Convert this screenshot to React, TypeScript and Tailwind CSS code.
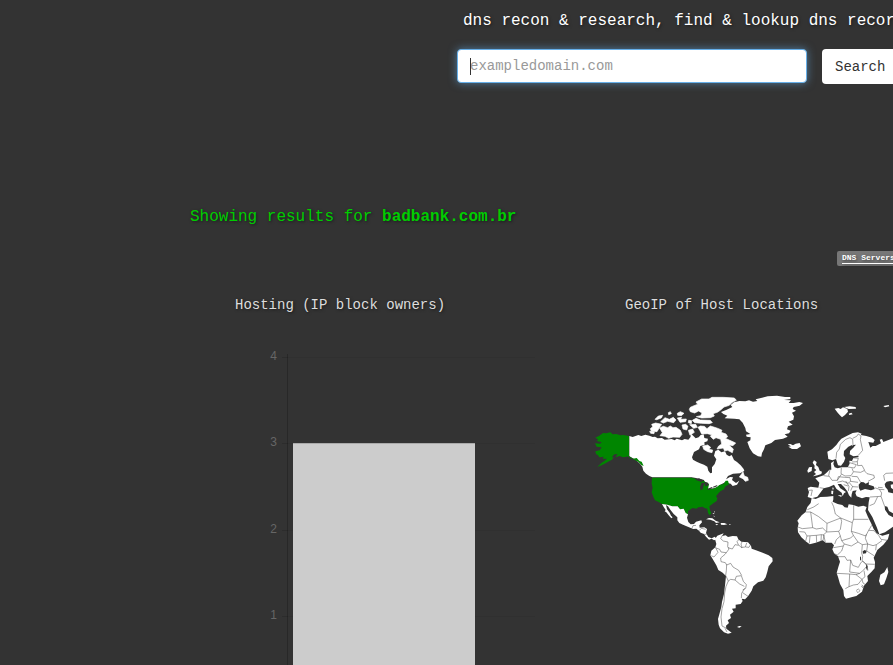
const SHADOW = "[text-shadow:1px_1px_3px_rgba(0,0,0,0.5)]";

function SearchHeader() {
  return (
    <header className="flex flex-col pl-[457px]">
      <h1 className={`whitespace-nowrap pt-[9px] pl-[6px] text-base leading-6 text-white ${SHADOW}`}>
        dns recon &amp; research, find &amp; lookup dns records
      </h1>
      <form className="mt-4 flex items-start gap-[15px]" onSubmit={(e) => e.preventDefault()}>
        <div className="relative shrink-0">
          <input
            type="text"
            autoFocus
            aria-label="Domain"
            placeholder="exampledomain.com"
            className="block h-[34px] w-[350px] rounded-[4px] border border-[#66afe9] bg-white px-3 text-sm text-[#555] caret-transparent shadow-[0_0_8px_rgba(102,175,233,0.6)] outline-none placeholder:text-[#999]"
          />
          <span aria-hidden="true" className="absolute top-[9px] left-[13px] h-[17px] w-px bg-[#333]" />
        </div>
        <button type="submit" className="h-[35px] shrink-0 rounded-[4px] bg-white px-[13px] text-sm text-[#333]">
          Search
        </button>
      </form>
    </header>
  );
}

const TICKS = [
  { label: "4", y: 17 },
  { label: "3", y: 103 },
  { label: "2", y: 190 },
  { label: "1", y: 276 },
];

function HostingChart() {
  return (
    <svg viewBox="0 0 300 380" className="mt-[25px] ml-[15px] block h-[380px] w-[300px]" role="img" aria-label="Hosting by IP block owner">
      {TICKS.map((t) => (
        <g key={t.label}>
          <path d={`M32 ${t.y + 0.5}H38`} stroke="#000" strokeOpacity=".12" />
          <path d={`M38 ${t.y + 0.5}H285`} stroke="#000" strokeOpacity=".06" />
          <text x="27" y={t.y + 3} textAnchor="end" fontSize="12" fill="#666" fontFamily="Liberation Sans, Arial, sans-serif">
            {t.label}
          </text>
        </g>
      ))}
      <path d="M37.5 14V370" stroke="#000" strokeOpacity=".2" />
      <path d="M43 103H225V362H43Z" fill="#ccc" />
      <path d="M43 103.5H225" stroke="#aaa" />
    </svg>
  );
}

function WorldMap() {
  return (
    <svg viewBox="0 0 909 780" className="mt-[70px] block h-[260px] w-[303px]" role="img" aria-label="World map of host locations" fill="#fff">
      {/* Canada, the Arctic islands and Newfoundland */}
      <g transform="translate(150 15)">
        <path d="M-32 138L-22 141-5 135 4 138 16 134 28 137 38 141 45 140 53 145 66 144 74 149 95 147 104 151 110 146 126 151 134 147 145 149 151 142 154 132 161 139 167 145 176 142 182 135 191 133 193 144 204 146 202 154 193 157 194 164 181 168 177 178 162 186 156 202 159 209 170 215 180 220 192 224 202 230 205 242 211 250 216 248 216 232 224 222 229 208 222 197 226 183 235 179 244 187 255 184 260 194 268 199 275 195 282 210 291 216 302 226 311 237 313 243 300 250 279 251 264 258 258 268 270 261 279 262 276 270 288 279 298 272 291 284 278 288 272 281 263 279 255 277 240 285 227 294 206 297 198 290 192 270 168 264 155 262 37 262 28 258 18 251 10 242 7 230 0 221-12 210-32 199Z" />
        <path
          stroke="#fff"
          strokeWidth="2"
          strokeLinejoin="round"
          d="M298 261L309 246 313 258 323 262 325 271 316 274 309 266ZM148 58L151 52 162 47 173 43 168 36 185 27 207 27 216 22 250 22 283 24 289 31 277 37 268 46 252 51 242 60 232 67 219 71 223 78 211 83 185 84 169 80 182 77 186 69 176 63 164 69 151 65ZM157 91L168 85 181 90 211 91 217 98 207 101 184 100 164 98ZM45 88L55 78 68 76 64 84 50 89ZM62 95L75 83 88 88 100 82 108 90 101 98 83 94 70 99ZM112 70L121 65 132 70 124 77 113 76ZM85 68L91 65 94 71 86 74ZM112 84L125 82 122 88 139 87 137 95 120 97ZM35 103L47 99 65 103 60 110 51 125 34 124 31 116 38 110ZM59 114L70 109 83 113 91 108 99 113 108 112 121 121 126 133 119 142 99 141 86 145 75 139 60 137 67 128ZM126 105L137 103 144 109 140 120 129 117ZM146 91L155 92 154 101 145 98ZM149 104L167 103 172 112 161 115ZM145 121L158 117 163 127 150 136ZM174 112L181 108 193 109 201 116 211 108 224 112 236 116 246 121 243 127 258 132 263 140 256 145 274 153 287 159 279 167 267 165 280 177 277 188 263 181 254 183 250 174 231 177 236 168 245 162 242 148 228 143 220 148 211 139 215 134 202 131 185 132 180 122ZM188 168L203 165 212 172 207 178 218 180 216 188 203 185 191 178ZM29 124L43 126 42 131 32 130Z"
        />
      </g>

      {/* Greenland, Iceland, Svalbard */}
      <g transform="translate(390 0)">
        <path d="M3 81L20 74 37 66 32 60 42 52 58 48 76 49 87 46 99 50 112 48 107 43 126 38 143 34 171 32 195 36 211 36 211 42 192 45 213 46 206 54 221 54 238 51 249 54 239 62 221 66 218 72 228 77 216 83 222 94 220 104 206 110 218 119 204 124 201 133 212 137 207 145 194 148 203 155 189 161 165 165 154 174 136 181 132 193 126 204 124 215 114 214 99 205 89 190 82 171 91 166 92 157 80 155 78 149 91 147 78 139 76 129 68 113 58 103 43 101 14 100 22 92 10 87ZM203 178L211 177 219 181 227 176 239 174 243 184 231 192 216 192 205 185 213 184ZM344 71L355 69 362 72 369 67 382 72 384 80 375 90 366 97 359 90 353 83ZM372 66L389 64 407 66 408 71 386 72ZM386 86L394 83 398 88 388 90ZM490 63L506 60 508 64 495 67Z" />
      </g>

      {/* United States */}
      <g fill="#008500">
        <path transform="translate(0 120)" d="M117 33L100 30 91 31 79 27 68 28 61 22 49 25 39 24 28 32 16 38 24 43 21 48 35 52 30 56 15 55 20 65 35 67 29 76 16 79 18 87 24 91 28 97 41 95 38 101 51 101 42 109 34 114 22 126 35 121 48 114 57 109 66 104 71 97 65 97 73 88 83 88 76 97 89 93 99 97 118 94 129 101 140 99 148 108 155 110 161 123 154 120 145 110 134 105 117 97Z" />
        <path transform="translate(150 240)" d="M36 38H155L171 43 190 47 207 57 204 73 219 71 232 65 238 60 251 57 257 47 264 47 267 58 255 65 252 73 241 79 234 86 228 94 232 100 230 108 220 115 208 124 210 136 214 145 209 151 204 144 202 131 193 129 188 125 175 127 169 131 158 129 149 134 144 139 144 148 137 144 131 131 120 133 113 124 97 124 82 119 66 117 56 111 45 106 40 95 35 82 38 68 35 56Z" />
      </g>
      <g transform="translate(150 240)">
        <path d="M66 117L82 119 97 124 113 124 120 133 131 131 137 144 144 148 141 158 145 171 152 178 162 177 168 170 184 166 186 172 178 181 179 188 193 187 201 192 198 204 205 216 215 220 224 215 231 222 222 226 215 221 207 224 198 215 192 207 182 203 177 197 169 191 159 192 147 187 129 179 118 174 112 166 112 157 101 147 91 134 84 124 78 120 81 133 89 143 93 152 98 157 94 160 86 151 79 142 74 139 77 135 71 126Z" />
        <path d="M198 163L207 159 217 160 227 167 239 172 228 174 223 169 211 164ZM226 177L235 178 230 181ZM242 174L253 174 262 178 252 180 243 179ZM267 177L273 178 269 180ZM217 144L223 145 222 148ZM221 151L224 155 222 156ZM222 139L225 140 223 143Z" />
        <g fill="#333">
          <path d="M165 44L177 40 190 46 185 51 174 47ZM185 53L193 54 188 73 182 76 180 65ZM192 50L204 53 206 61 196 64ZM201 72L216 66 218 69 205 75ZM219 65L232 60 231 64 221 68Z" />
        </g>
        <path d="M155 192L159 182 168 181M177 197L184 190 197 193M193 208L200 208" fill="none" stroke="#444" strokeWidth="1.5" />
      </g>

      {/* South America */}
      <g transform="translate(330 420)">
        <path d="M45 42L52 32 65 27 71 25 66 33 77 31 84 36 98 33 111 34 115 43 124 50 144 52 153 62 155 71 168 76 188 83 206 91 217 99 218 109 206 124 202 140 197 157 190 167 174 172 160 184 155 197 144 214 135 223 125 221 128 228 122 237 107 239 107 250 96 251 101 260 90 269 93 279 83 286 87 294 78 302 79 311 95 323 84 326 72 322 60 310 56 299 54 282 59 264 64 246 66 231 72 207 75 181 78 153 68 143 55 135 49 121 38 102 31 91 34 77 46 67 49 57ZM111 306L118 303 125 304 118 308Z" />
        <path d="M67 31L62 41 70 48 84 51 83 65 87 72 79 83 M84 68L97 72 105 59 116 61 111 50 117 43M117 61L126 69 123 57 126 51M126 67L136 66 140 54M137 66L147 67 151 60M46 68L59 73 63 81 79 83 75 88 62 99 63 110 76 113 80 120 92 115 99 126 116 136 125 151M34 92L42 96 54 82 47 68M80 119L79 137 77 151 85 168 78 184 74 204 72 230 66 251 63 276 66 303 78 309M85 168L92 163 105 165 109 154 124 152 130 169 139 179 137 190 128 195M105 165L119 177 133 184M134 190L125 205 124 219M128 203L144 214M75 310L81 321" fill="none" stroke="#444" strokeWidth="1.5" />
      </g>

      {/* Europe and western Asia */}
      <g transform="translate(600 120)">
        <path d="M112 80L126 73 139 60 146 50 154 41 170 33 188 24 204 22 215 26 212 30 229 33 246 38 254 45 250 53 235 51 241 68 248 63 257 63 273 55 269 44 276 42 280 51 309 40V305L285 322 268 328 260 306 247 276 234 255 236 232 239 217 228 216 216 220 200 214 196 204 200 196 188 198 185 208 184 218 177 211 172 199 162 186 153 177 143 177 151 190 168 201 162 205 158 214 155 203 139 191 132 179 117 186 101 190 91 203 82 215 65 220 53 216 57 201 53 189 62 185 85 188 88 173 76 160 86 156 101 151 112 141 118 134 124 134 123 114 132 108 130 117 134 127 143 130 155 127 173 127 179 116 178 107 186 108 190 99 207 96 203 92 190 94 179 88 180 76 191 67 186 60 175 65 162 78 161 91 166 99 162 110 153 122 144 121 138 102 127 106 115 102Z" />
        <path d="M68 113L72 106 80 111 78 120 85 126 89 137 96 140 94 147 83 151 69 154 78 147 72 141 79 135 73 130 74 122ZM57 127L66 126 65 138 54 143 52 137ZM143 211L155 211 154 216ZM124 197L130 197 129 208 124 207ZM128 187L131 189 130 194 127 193Z" />
        <g fill="#333">
          <path d="M207 190L206 179 213 171 221 172 227 176 237 171 236 179 251 184 254 192 243 196 225 192 211 197ZM284 177L290 170 301 168 309 170V178L302 179 303 188 309 193V205L295 202 293 194 286 186ZM284 243L292 245 297 258 309 265V277L296 270 285 254Z" />
          <path d="M190 60L198 59 180 78 177 87 173 88 176 74Z" />
        </g>
        <path d="M138 101L140 82 148 72 151 58 167 43 180 38 188 43 189 60M188 40L200 34 205 27 213 33 211 44 218 76 204 92M190 99L205 100 202 110 186 111M179 113L199 119 193 129 174 126M202 110L203 122 216 121 224 136 212 142 190 140 186 130M154 128L153 146 165 153 183 152 190 141M120 134L116 151 126 166 142 166 154 148M101 152L117 154M89 188L106 191M57 196L67 195 63 213M142 166L145 155 164 157 180 158 182 169 174 175 158 168 142 172M182 169L204 172M185 154L202 155 212 172M223 137L231 146 252 151 253 159 234 169M179 174L188 185 205 186M167 168L177 184 175 198M188 184L182 197M161 179L174 183M254 188L268 193 275 204 273 214 240 216M268 193L283 194M273 214L284 244M263 215L253 236 239 242M264 187L278 188M281 151L288 145 309 144M281 151L284 167" fill="none" stroke="#444" strokeWidth="1.5" />
      </g>

      {/* Africa */}
      <g transform="translate(600 330)">
        <path d="M65 9L77 12 91 6 111 5 130 3 130 13 128 20 143 27 157 30 164 37 173 38 176 28 190 30 205 35 220 32 230 36 226 47 234 66 243 84 251 102 260 115 277 122 298 116 294 132 280 149 262 165 256 178 251 188 255 201 254 220 244 231 232 243 234 258 222 272 216 290 199 303 184 307 168 311 162 303 160 285 150 267 144 246 140 234 145 216 150 200 144 184 133 176 127 163 132 151 125 143 107 143 98 136 77 143 59 148 47 139 34 127 24 112 23 98 26 85 22 77 35 61 47 51 52 36 62 24ZM292 216L295 231 289 250 282 268 272 271 267 258 271 239 283 232Z" />
        <path fill="#333" d="M218 169L224 165 230 168 228 175 219 176ZM210 184L213 187 213 197 210 194ZM229 207L233 213 232 228 228 218Z" />
        <path d="M47 51H62L86 65 111 85 152 69 136 57 131 35 125 22M86 26L71 36 52 44M62 51L68 98 37 101 24 96M152 69L155 79 151 103 146 109 110 111 111 85M152 69L187 83 191 72V31M191 73H235M187 83L184 109 190 121 182 129 155 137 151 123 146 109M110 111L101 119 106 142M68 98L79 102 98 99 109 110M28 110L44 111 51 123 47 138M51 123L63 122 79 121 80 142M79 121L94 119 93 138M94 119L102 120 99 137M60 123L58 145M151 123L139 134 134 147M184 109L205 115 227 123 236 106 245 91M190 121L204 141 184 153 163 147 155 137M204 141L217 149 233 147 226 130 229 118M236 106L252 107 266 121M266 121L273 133 292 136M233 147L249 152 259 149 276 137M259 149L257 166M233 147L230 168 252 182M217 149L215 174 218 184 216 197 227 207 254 208M130 158L160 153 163 147M130 175L142 180 155 168 160 153M144 185H165L171 196 182 195 188 211 205 217 212 204 218 198M182 195L179 231 209 235 221 225 228 216M140 235L179 237 177 275 166 281 M179 237L198 239 209 235M177 275L190 270 204 268 216 253 198 239M216 253L219 264 228 270M216 253L225 245 222 227M218 198L228 207 234 226M199 286L205 282 210 287 204 293 199 288M215 270L220 273 218 278 214 273" fill="none" stroke="#444" strokeWidth="1.5" />
      </g>
    </svg>
  );
}

export default function App() {
  return (
    <div className="h-screen w-full overflow-hidden bg-[#333] font-['Liberation_Mono',monospace]">
      <SearchHeader />
      <main>
        <p className={`mt-[121px] pl-[190px] text-base leading-6 text-[#00cc00] ${SHADOW}`}>
          Showing results for <strong className="font-bold">badbank.com.br</strong>
        </p>
        <nav className="mt-[22px] flex pl-[837px]">
          <a
            href="#dns"
            className={`h-[15px] shrink-0 whitespace-nowrap rounded-[2px] bg-[#777] px-[5px] text-[8px] leading-[14px] font-bold text-white underline underline-offset-3 ${SHADOW}`}
          >
            DNS Servers
          </a>
        </nav>
        <div className="mt-[29px] flex pl-[235px]">
          <section className="w-[355px] shrink-0">
            <h2 className={`text-sm leading-5 text-[#ddd] ${SHADOW}`}>Hosting (IP block owners)</h2>
            <HostingChart />
          </section>
          <section className="shrink-0">
            <h2 className={`pl-[35px] text-sm leading-5 text-[#ddd] ${SHADOW}`}>GeoIP of Host Locations</h2>
            <WorldMap />
          </section>
        </div>
      </main>
    </div>
  );
}
